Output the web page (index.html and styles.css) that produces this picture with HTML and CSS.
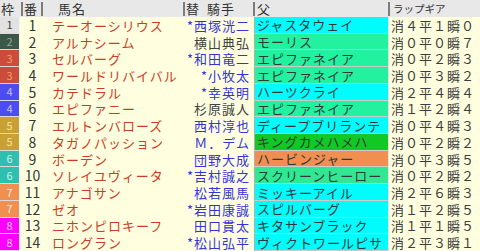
FILE: index.html
```html
<!DOCTYPE html>
<html lang="ja">
<head>
<meta charset="utf-8">
<title>出馬表</title>
<link rel="stylesheet" href="styles.css">
</head>
<body>
<div class="sheet">
  <div class="head">
    <div class="h h-waku">枠</div>
    <div class="h h-ban">番</div>
    <div class="h h-name">馬名</div>
    <div class="h h-jockey"><span>替</span><span class="kishu">騎手</span></div>
    <div class="h h-sire">父</div>
    <div class="h h-lap">ラップギア</div>
  </div>
  <div class="rows">
    <div class="row"><div class="waku w1">1</div><div class="num">1</div><div class="name">テーオーシリウス</div><div class="jockey blue">*西塚洸二</div><div class="sire cyan">ジャスタウェイ</div><div class="lap">消４平１瞬０</div></div>
    <div class="row"><div class="waku w2">2</div><div class="num">2</div><div class="name">アルナシーム</div><div class="jockey dark">横山典弘</div><div class="sire green">モーリス</div><div class="lap">消０平０瞬７</div></div>
    <div class="row"><div class="waku w3">3</div><div class="num">3</div><div class="name">セルバーグ</div><div class="jockey blue">*和田竜二</div><div class="sire green">エピファネイア</div><div class="lap">消０平２瞬３</div></div>
    <div class="row"><div class="waku w3">3</div><div class="num">4</div><div class="name">ワールドリバイバル</div><div class="jockey blue">*小牧太</div><div class="sire green">エピファネイア</div><div class="lap">消０平３瞬２</div></div>
    <div class="row"><div class="waku w4">4</div><div class="num">5</div><div class="name">カテドラル</div><div class="jockey blue">*幸英明</div><div class="sire cyan">ハーツクライ</div><div class="lap">消２平４瞬４</div></div>
    <div class="row"><div class="waku w4">4</div><div class="num">6</div><div class="name">エピファニー</div><div class="jockey dark">杉原誠人</div><div class="sire green">エピファネイア</div><div class="lap">消１平２瞬４</div></div>
    <div class="row"><div class="waku w5">5</div><div class="num">7</div><div class="name">エルトンバローズ</div><div class="jockey blue">西村淳也</div><div class="sire cyan">ディープブリランテ</div><div class="lap">消０平４瞬３</div></div>
    <div class="row"><div class="waku w5">5</div><div class="num">8</div><div class="name">タガノパッション</div><div class="jockey blue">Ｍ．デム</div><div class="sire kg">キングカメハメハ</div><div class="lap">消０平２瞬２</div></div>
    <div class="row"><div class="waku w6">6</div><div class="num">9</div><div class="name">ボーデン</div><div class="jockey blue">団野大成</div><div class="sire orange">ハービンジャー</div><div class="lap">消０平３瞬５</div></div>
    <div class="row"><div class="waku w6">6</div><div class="num">10</div><div class="name">ソレイユヴィータ</div><div class="jockey blue">*吉村誠之</div><div class="sire green2">スクリーンヒーロー</div><div class="lap">消０平２瞬２</div></div>
    <div class="row"><div class="waku w7">7</div><div class="num">11</div><div class="name">アナゴサン</div><div class="jockey blue">松若風馬</div><div class="sire cyan">ミッキーアイル</div><div class="lap">消２平６瞬３</div></div>
    <div class="row"><div class="waku w7">7</div><div class="num">12</div><div class="name">ゼオ</div><div class="jockey blue">*岩田康誠</div><div class="sire cyan">スピルバーグ</div><div class="lap">消１平２瞬５</div></div>
    <div class="row"><div class="waku w8">8</div><div class="num">13</div><div class="name">ニホンピロキーフ</div><div class="jockey blue">田口貫太</div><div class="sire cyan">キタサンブラック</div><div class="lap">消１平１瞬５</div></div>
    <div class="row"><div class="waku w8">8</div><div class="num">14</div><div class="name">ロングラン</div><div class="jockey blue">*松山弘平</div><div class="sire cyan">ヴィクトワールピサ</div><div class="lap">消２平３瞬１</div></div>
  </div>
</div>
</body>
</html>
```
FILE: styles.css
```css
html, body {
  margin: 0;
  padding: 0;
}
body {
  width: 480px;
  height: 251px;
  overflow: hidden;
  background: #ffffe0;
  font-family: "Noto Sans CJK JP", "Noto Sans", sans-serif;
  font-size: 13px;
  color: #333;
}
.sheet {
  display: flex;
  flex-direction: column;
  height: 251px;
}
.head {
  display: flex;
  height: 17px;
  background: #e8e8e8;
  flex: none;
}
.h {
  margin-top: 2px;
  height: 14px;
  display: flex;
  align-items: center;
  border-left: 2px solid #7c7c7c;
  line-height: 14px;
  color: #333;
  white-space: nowrap;
  letter-spacing: 1px;
}
.h-waku { width: 21px; border-left: none; padding-left: 1px; box-sizing: border-box; }
.h-ban { width: 20px; box-sizing: border-box; padding-left: 1px; }
.h-name { width: 142px; box-sizing: border-box; padding-left: 15px; }
.h-jockey { width: 70px; box-sizing: border-box; padding-left: 1px; }
.h-jockey .kishu { margin-left: 7px; }
.h-sire { width: 135px; box-sizing: border-box; padding-left: 2px; }
.h-lap { width: 92px; box-sizing: border-box; padding-left: 3px; font-size: 10.5px; letter-spacing: 0; }

.rows {
  flex: 1;
  display: flex;
  flex-direction: column;
}
.row {
  flex: 1;
  display: grid;
  grid-template-columns: 20px 25px 138px 71px 135px 91px;
  min-height: 0;
}
.row > div {
  display: flex;
  align-items: center;
  white-space: nowrap;
  line-height: 15px;
  min-width: 0;
  letter-spacing: 1px;
}
.waku {
  justify-content: center;
  font-size: 11px;
  box-sizing: border-box;
  border-bottom: 1px solid #dadada;
  border-right: 1px solid #f6f6f0;
}
.row > .waku { letter-spacing: 0; }
.w1 { background: #e2e2e2; color: #444; }
.w2 { background: #3b5747; color: #9aa8a0; }
.w3 { background: #cc4c3a; color: #f29a6a; }
.w4 { background: #4c4cf2; color: #c4c4ff; }
.w5 { background: #c9a033; color: #f2e2a8; }
.w6 { background: #2ebfae; color: #c6f2ec; }
.w7 { background: #f08f50; color: #fff2e6; }
.w8 { background: #ff00ff; color: #ffd8ff; }

.row > .num {
  justify-content: center;
  color: #2e3a36;
  font-size: 14px;
  letter-spacing: 0;
}
.name {
  padding-left: 7px;
  color: #cc3c24;
}
.jockey {
  justify-content: flex-end;
  padding-right: 4px;
}
.jockey.blue { color: #3434d6; }
.jockey.dark { color: #3c4440; }

.sire {
  box-sizing: border-box;
  padding-left: 2px;
  border-left: 1px solid #b0b0b0;
  border-right: 1px solid #e4e4e4;
  border-bottom: 1px solid #cccccc;
  color: #2c3a3a;
}
.cyan { background: #00fcfc; }
.green { background: #22f2a0; }
.green2 { background: #30e892; }
.kg { background: #12c824; }
.orange { background: #f08f50; }

.lap {
  padding-left: 2px;
  color: #3c3c3c;
}
```
